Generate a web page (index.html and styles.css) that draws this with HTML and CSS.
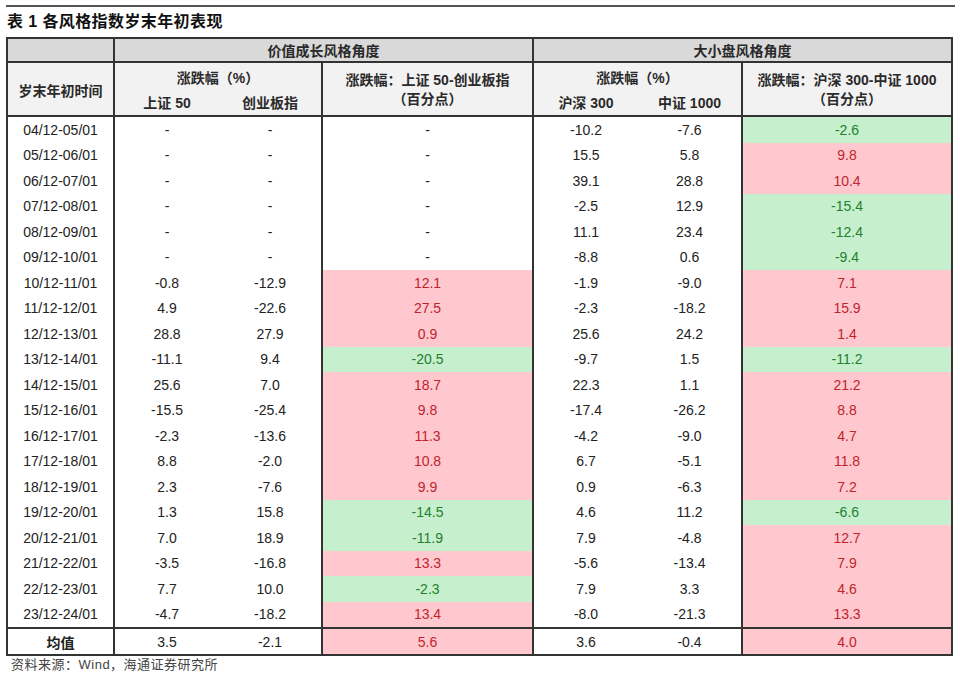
FILE: index.html
```html
<!DOCTYPE html>
<html lang="zh-CN">
<head>
<meta charset="utf-8">
<title>表 1 各风格指数岁末年初表现</title>
<link rel="stylesheet" href="styles.css">
</head>
<body>
<div class="page">
  <div class="rule"></div>
  <div class="title">表 <b class="num">1</b> 各风格指数岁末年初表现</div>
  <table class="grid">
    <colgroup>
      <col class="c1"><col class="c2"><col class="c3"><col class="c4"><col class="c5"><col class="c6"><col class="c7">
    </colgroup>
    <thead>
      <tr class="ha">
        <th class="vr"></th>
        <th colspan="3" class="vr">价值成长风格角度</th>
        <th colspan="3">大小盘风格角度</th>
      </tr>
      <tr class="hb">
        <th rowspan="2" class="vr hb-bottom">岁末年初时间</th>
        <th colspan="2" class="vr">涨跌幅（%）</th>
        <th rowspan="2" class="vr hb-bottom"><div class="two">涨跌幅：上证 50-创业板指<br>（百分点）</div></th>
        <th colspan="2" class="vr">涨跌幅（%）</th>
        <th rowspan="2" class="hb-bottom"><div class="two">涨跌幅：沪深 300-中证 1000<br>（百分点）</div></th>
      </tr>
      <tr class="hc">
        <th class="hb-bottom">上证 50</th>
        <th class="vr hb-bottom">创业板指</th>
        <th class="hb-bottom">沪深 300</th>
        <th class="vr hb-bottom">中证 1000</th>
      </tr>
    </thead>
    <tbody>
      <tr><td class="vr">04/12-05/01</td><td>-</td><td class="vr">-</td><td class="vr">-</td><td>-10.2</td><td class="vr">-7.6</td><td class="dn">-2.6</td></tr>
      <tr><td class="vr">05/12-06/01</td><td>-</td><td class="vr">-</td><td class="vr">-</td><td>15.5</td><td class="vr">5.8</td><td class="up">9.8</td></tr>
      <tr><td class="vr">06/12-07/01</td><td>-</td><td class="vr">-</td><td class="vr">-</td><td>39.1</td><td class="vr">28.8</td><td class="up">10.4</td></tr>
      <tr><td class="vr">07/12-08/01</td><td>-</td><td class="vr">-</td><td class="vr">-</td><td>-2.5</td><td class="vr">12.9</td><td class="dn">-15.4</td></tr>
      <tr><td class="vr">08/12-09/01</td><td>-</td><td class="vr">-</td><td class="vr">-</td><td>11.1</td><td class="vr">23.4</td><td class="dn">-12.4</td></tr>
      <tr><td class="vr">09/12-10/01</td><td>-</td><td class="vr">-</td><td class="vr">-</td><td>-8.8</td><td class="vr">0.6</td><td class="dn">-9.4</td></tr>
      <tr><td class="vr">10/12-11/01</td><td>-0.8</td><td class="vr">-12.9</td><td class="vr up">12.1</td><td>-1.9</td><td class="vr">-9.0</td><td class="up">7.1</td></tr>
      <tr><td class="vr">11/12-12/01</td><td>4.9</td><td class="vr">-22.6</td><td class="vr up">27.5</td><td>-2.3</td><td class="vr">-18.2</td><td class="up">15.9</td></tr>
      <tr><td class="vr">12/12-13/01</td><td>28.8</td><td class="vr">27.9</td><td class="vr up">0.9</td><td>25.6</td><td class="vr">24.2</td><td class="up">1.4</td></tr>
      <tr><td class="vr">13/12-14/01</td><td>-11.1</td><td class="vr">9.4</td><td class="vr dn">-20.5</td><td>-9.7</td><td class="vr">1.5</td><td class="dn">-11.2</td></tr>
      <tr><td class="vr">14/12-15/01</td><td>25.6</td><td class="vr">7.0</td><td class="vr up">18.7</td><td>22.3</td><td class="vr">1.1</td><td class="up">21.2</td></tr>
      <tr><td class="vr">15/12-16/01</td><td>-15.5</td><td class="vr">-25.4</td><td class="vr up">9.8</td><td>-17.4</td><td class="vr">-26.2</td><td class="up">8.8</td></tr>
      <tr><td class="vr">16/12-17/01</td><td>-2.3</td><td class="vr">-13.6</td><td class="vr up">11.3</td><td>-4.2</td><td class="vr">-9.0</td><td class="up">4.7</td></tr>
      <tr><td class="vr">17/12-18/01</td><td>8.8</td><td class="vr">-2.0</td><td class="vr up">10.8</td><td>6.7</td><td class="vr">-5.1</td><td class="up">11.8</td></tr>
      <tr><td class="vr">18/12-19/01</td><td>2.3</td><td class="vr">-7.6</td><td class="vr up">9.9</td><td>0.9</td><td class="vr">-6.3</td><td class="up">7.2</td></tr>
      <tr><td class="vr">19/12-20/01</td><td>1.3</td><td class="vr">15.8</td><td class="vr dn">-14.5</td><td>4.6</td><td class="vr">11.2</td><td class="dn">-6.6</td></tr>
      <tr><td class="vr">20/12-21/01</td><td>7.0</td><td class="vr">18.9</td><td class="vr dn">-11.9</td><td>7.9</td><td class="vr">-4.8</td><td class="up">12.7</td></tr>
      <tr><td class="vr">21/12-22/01</td><td>-3.5</td><td class="vr">-16.8</td><td class="vr up">13.3</td><td>-5.6</td><td class="vr">-13.4</td><td class="up">7.9</td></tr>
      <tr><td class="vr">22/12-23/01</td><td>7.7</td><td class="vr">10.0</td><td class="vr dn">-2.3</td><td>7.9</td><td class="vr">3.3</td><td class="up">4.6</td></tr>
      <tr><td class="vr">23/12-24/01</td><td>-4.7</td><td class="vr">-18.2</td><td class="vr up">13.4</td><td>-8.0</td><td class="vr">-21.3</td><td class="up">13.3</td></tr>
      <tr class="avg"><td class="vr label">均值</td><td>3.5</td><td class="vr">-2.1</td><td class="vr up">5.6</td><td>3.6</td><td class="vr">-0.4</td><td class="up">4.0</td></tr>
    </tbody>
  </table>
  <div class="source">资料来源：Wind，海通证券研究所</div>
</div>
</body>
</html>
```

FILE: styles.css
```css
html, body {
  margin: 0;
  padding: 0;
  background: #ffffff;
}

body {
  font-family: "Liberation Sans", "Noto Sans CJK SC", sans-serif;
  color: #222222;
}

.page {
  padding-left: 6px;
}

.rule {
  margin-top: 5px;
  width: 949px;
  height: 2px;
  background: #555555;
}

.title {
  height: 30px;
  line-height: 30px;
  font-size: 16px;
  font-weight: 700;
  letter-spacing: 0.4px;
  padding-left: 1px;
  color: #111111;
}

.title .num {
  font-weight: 700;
}

.grid {
  width: 947px;
  table-layout: fixed;
  border-collapse: separate;
  border-spacing: 0;
  border: 2px solid #333333;
  font-size: 14px;
}

.c1 { width: 107px; }
.c2 { width: 104px; }
.c3 { width: 104px; }
.c4 { width: 211px; }
.c5 { width: 104px; }
.c6 { width: 105px; }
.c7 { width: 208px; }

.grid th,
.grid td {
  padding: 0;
  text-align: center;
  vertical-align: middle;
  white-space: nowrap;
}

.grid th {
  font-weight: 700;
  color: #2a2a2a;
}

.grid .vr {
  border-right: 2px solid #333333;
}

.ha {
  height: 24px;
}

.ha th {
  background: #d9d9d9;
  border-bottom: 2px solid #333333;
}

.hb {
  height: 26px;
}

.hc {
  height: 28px;
}

.hb th,
.hc th {
  background: #f2f2f2;
}

.hb th {
  padding-top: 1px;
}

.hc th {
  padding-bottom: 1px;
}

.grid .hb-bottom {
  border-bottom: 2px solid #333333;
}

.two {
  line-height: 19px;
}

tbody tr {
  height: 25.5px;
}

tbody td {
  color: #222222;
}

.grid td.up {
  background: #ffc7ce;
  color: #c0252d;
}

.grid td.dn {
  background: #c6efce;
  color: #23802c;
}

.grid tr.avg {
  height: 27px;
}

.avg td {
  border-top: 2px solid #333333;
}

.avg td.label {
  font-weight: 700;
}

.source {
  padding-left: 5px;
  font-size: 13px;
  line-height: 18px;
  letter-spacing: 0.5px;
  color: #444444;
}
```
